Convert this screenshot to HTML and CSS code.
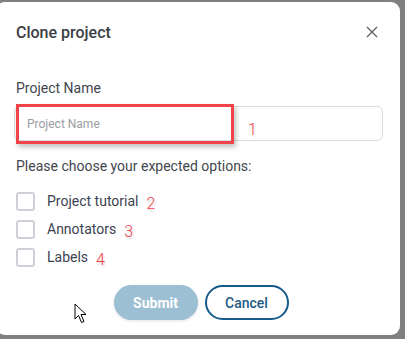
FILE: index.html
```html
<!DOCTYPE html>
<html lang="en">
<head>
    <meta charset="UTF-8">
    <title>Clone project</title>
    <link rel="stylesheet" href="styles.css">
</head>
<body>
    <div class="dialog">
        <div class="kop">
            <span class="titel">Clone project</span>
            <svg class="sluit" width="12" height="12" viewBox="0 0 12 12">
                <path d="M1 1 L11 11 M11 1 L1 11" stroke="#5f6368" stroke-width="1.4" fill="none"/>
            </svg>
        </div>

        <div class="veld">
            <label class="label">Project Name</label>
            <div class="invoer-wrap">
                <input class="invoer" type="text" placeholder="Project Name">
                <div class="markering"></div>
                <span class="nummer nr1">1</span>
            </div>
        </div>

        <p class="uitleg">Please choose your expected options:</p>

        <div class="opties">
            <div class="optie"><span class="vakje"></span><span>Project tutorial</span><span class="nummer">2</span></div>
            <div class="optie"><span class="vakje"></span><span>Annotators</span><span class="nummer">3</span></div>
            <div class="optie"><span class="vakje"></span><span>Labels</span><span class="nummer">4</span></div>
        </div>

        <div class="knoppen">
            <button class="knop submit">Submit</button>
            <button class="knop cancel">Cancel</button>
        </div>

        <svg class="cursor" width="14" height="21" viewBox="0 0 14 21">
            <path d="M1 1 L1 16 L4.5 12.5 L7.5 19.5 L10 18.5 L7 11.5 L12 11.5 Z" fill="#fff" stroke="#000" stroke-width="1"/>
        </svg>
    </div>
</body>
</html>
```

FILE: styles.css
```css
body {
    margin: 0;
    background: #808080;
    font-family: Roboto, "Liberation Sans", sans-serif;
    height: 339px;
    overflow: hidden;
}

.dialog {
    position: relative;
    box-sizing: border-box;
    margin: 2px 0 0 -4px;
    width: 404px;
    height: 333px;
    background: #fff;
    border-radius: 9px;
    padding: 0 16px 0 20px;
}

.kop {
    display: flex;
    align-items: center;
    justify-content: space-between;
    padding-top: 19px;
    height: 22px;
}

.titel {
    font-size: 16px;
    font-weight: 500;
    color: #3a3e44;
}

.sluit {
    margin-right: 6px;
}

.veld {
    margin-top: 35px;
}

.label {
    display: block;
    font-size: 14px;
    color: #41464d;
    line-height: 20px;
}

.invoer-wrap {
    position: relative;
    margin-top: 8px;
    width: 369px;
    margin-left: -2px;
}

.invoer {
    box-sizing: border-box;
    width: 100%;
    height: 35px;
    border: 1px solid #d8dce2;
    border-radius: 6px;
    padding: 1px 12px 0;
    font-family: Roboto, "Liberation Sans", sans-serif;
    font-size: 12px;
    outline: none;
}

.invoer::placeholder {
    color: #9a9ca2;
}

.markering {
    position: absolute;
    left: 2px;
    top: -2px;
    width: 218px;
    height: 40px;
    box-sizing: border-box;
    border: 3px solid #f2434b;
    box-shadow: 2px 3px 5px rgba(0, 0, 0, 0.25);
}

.nummer {
    color: #f0434b;
    font-size: 16px;
    font-weight: 300;
    margin-left: 8px;
    text-shadow: 1px 2px 3px rgba(0, 0, 0, 0.2);
    position: relative;
    top: 2px;
}

.nr1 {
    position: absolute;
    left: 234px;
    top: 14px;
    margin: 0;
}

.uitleg {
    margin: 15px 0 0;
    font-size: 14px;
    line-height: 20px;
    color: #41464d;
}

.opties {
    margin-top: 15px;
    display: flex;
    flex-direction: column;
    gap: 8px;
}

.optie {
    display: flex;
    align-items: center;
    font-size: 14px;
    color: #3b4250;
    height: 20px;
}

.vakje {
    box-sizing: border-box;
    width: 19px;
    height: 19px;
    border: 2px solid #cdd1d7;
    border-radius: 3px;
    margin-right: 12px;
}

.knoppen {
    display: flex;
    justify-content: center;
    gap: 7px;
    margin-top: 18px;
    padding-left: 2px;
}

.knop {
    box-sizing: border-box;
    width: 84px;
    height: 35px;
    border-radius: 18px;
    font-family: Roboto, "Liberation Sans", sans-serif;
    font-size: 14px;
    font-weight: 700;
}

.submit {
    background: #9cbfd4;
    border: none;
    color: #fff;
    box-shadow: 0 1px 3px rgba(0, 0, 0, 0.12);
}

.cancel {
    background: #fff;
    border: 2px solid #175b8a;
    color: #1e5a85;
    font-weight: 500;
}

.cursor {
    position: absolute;
    left: 78px;
    top: 301px;
}
```
